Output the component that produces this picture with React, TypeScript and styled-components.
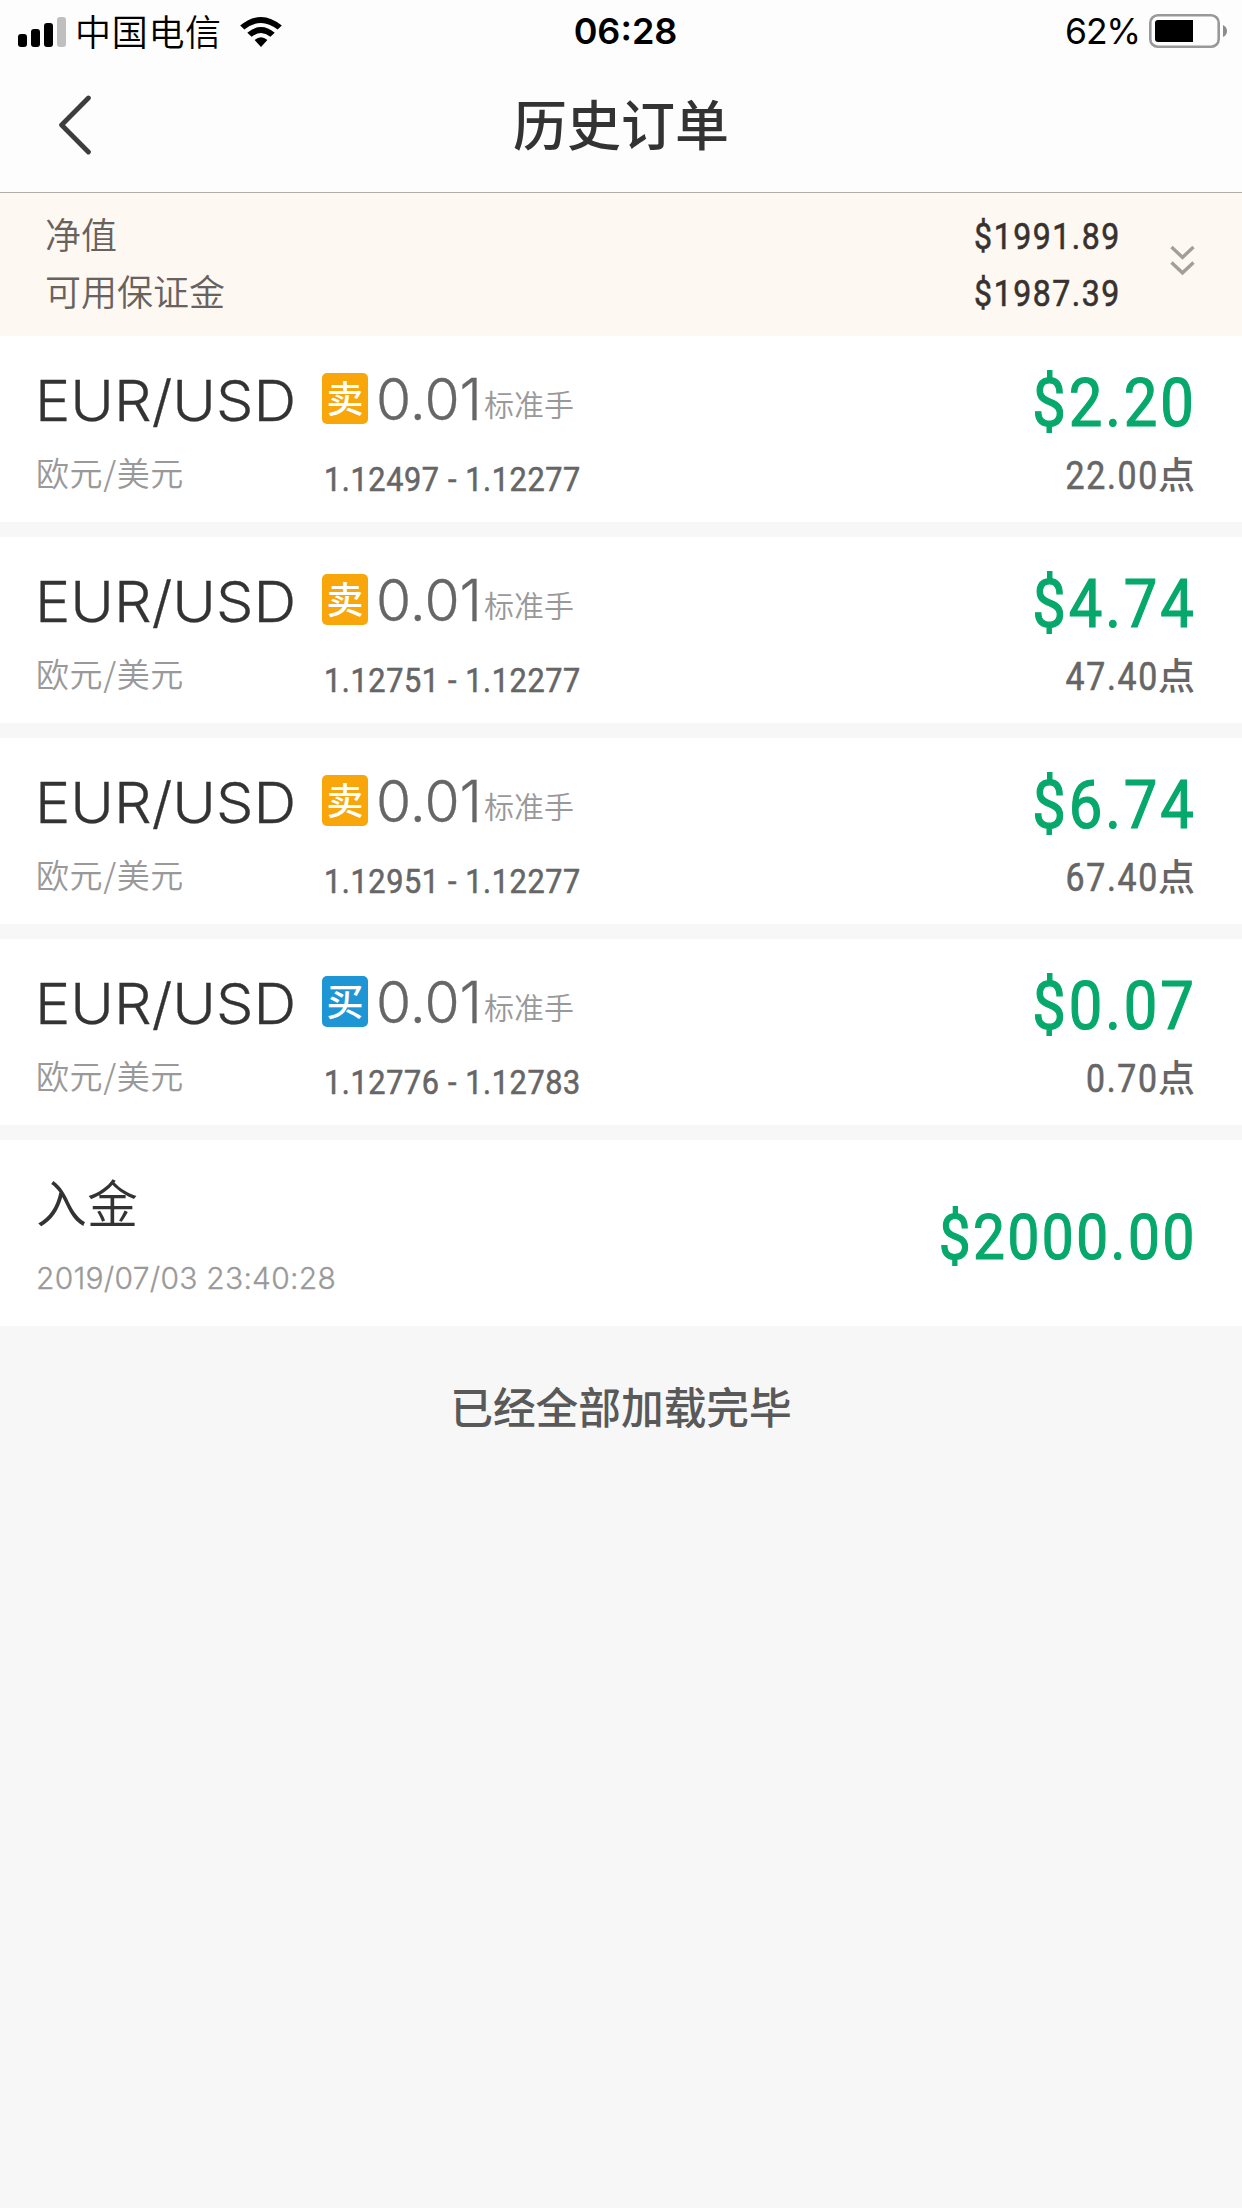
import React from "react";
import styled, { createGlobalStyle } from "styled-components";

const GlobalStyle = createGlobalStyle`
  * { box-sizing: border-box; }
  body { margin: 0; background: #f7f7f7; }
`;

const cjk = `"Noto Sans CJK SC", sans-serif`;
const ui = `Inter, ${cjk}`;
const din = `Roboto, ${cjk}`;

const Screen = styled.div`
  width: 1242px;
  min-height: 2208px;
  background: #f7f7f7;
  font-family: ${ui};
  color: #333;
  white-space: nowrap;
`;

const Top = styled.header`
  height: 193px;
  background: #fdfdfd;
  border-bottom: 1px solid #b5aca5;
`;

const StatusBar = styled.div`
  display: grid;
  grid-template-columns: 1fr auto 1fr;
  height: 62px;
  padding: 0 14px 0 18px;
  color: #000;
  font-size: 36px;
  line-height: 62px;
`;

const StatusSide = styled.div<{ $end?: boolean }>`
  display: flex;
  align-items: center;
  justify-content: ${(p) => (p.$end ? "flex-end" : "flex-start")};
`;

const Carrier = styled.span`
  margin: 0 18px 0 8px;
  font-family: ${cjk};
  font-weight: 350;
  letter-spacing: 0.7px;
  line-height: 58px;
  padding-bottom: 4px;
`;

const Clock = styled.time`
  padding-left: 5px;
  font-weight: 600;
`;

const Percent = styled.span`
  margin-right: 9px;
  font-size: 35.5px;
  line-height: 64px;
  letter-spacing: -1.2px;
`;

const NavBar = styled.div`
  display: grid;
  grid-template-columns: 100px 1fr 100px;
  align-items: center;
  height: 126px;
`;

const BackButton = styled.button`
  height: 126px;
  padding: 0 0 0 58px;
  border: 0;
  background: none;
  display: flex;
  align-items: center;
`;

const Title = styled.h1`
  margin: 0;
  font: 500 54px/122px ${cjk};
  height: 126px;
  text-align: center;
`;

const Summary = styled.section`
  display: flex;
  height: 143px;
  padding: 14px 46px 0 45px;
  background: #fef8f2;
`;

const SummaryLines = styled.dl`
  flex: 1;
  margin: 0;
`;

const SummaryLine = styled.div`
  display: flex;
  justify-content: space-between;
  height: 57px;
`;

const SummaryLabel = styled.dt`
  font: 350 36px/53px ${cjk};
  color: #67625e;
`;

const Din = styled.span<{ $size: number; $squeeze: number; $spacing: number; $stroke?: number; $left?: boolean }>`
  display: inline-block;
  margin-right: ${(p) => 1 - p.$spacing}px;
  font-family: ${din};
  font-weight: 400;
  font-size: ${(p) => p.$size}px;
  letter-spacing: ${(p) => p.$spacing}px;
  -webkit-text-stroke: ${(p) => p.$stroke ?? 0.6}px currentColor;
  transform: scaleX(${(p) => p.$squeeze});
  transform-origin: ${(p) => (p.$left ? "left" : "right")} center;
`;

const SummaryValue = styled.dd`
  margin: 0;
  line-height: 60px;
  color: #37322f;
`;

const Expand = styled.div`
  width: 76px;
  padding: 38px 0 0 50px;
  line-height: 0;
`;

const Row = styled.article`
  display: flex;
  height: 186px;
  margin-bottom: 15px;
  padding: 0 47px 0 35px;
  background: #fff;
`;

const Instrument = styled.div`
  width: 287px;
  padding-top: 32px;
`;

const Symbol = styled.div`
  font-size: 56px;
  font-weight: 300;
  line-height: 66px;
  -webkit-text-stroke: 0.3px currentColor;
  transform: scaleX(1.06);
  transform-origin: left center;
`;

const SymbolName = styled.div`
  margin: 14px 0 0 1px;
  font: 350 33px/48px ${cjk};
  letter-spacing: 0.6px;
  color: #999;
`;

const Deal = styled.div`
  flex: 1;
  padding-top: 37px;
`;

const Volume = styled.div`
  display: flex;
  height: 51px;
`;

const Side = styled.span<{ $buy: boolean }>`
  width: 46px;
  height: 51px;
  margin-right: 8px;
  border-radius: 5px;
  background: ${(p) => (p.$buy ? "#1e96d6" : "#f9a60a")};
  color: #fff;
  font: 500 37px/48px ${cjk};
  text-align: center;
`;

const Lots = styled.span`
  font-size: 57px;
  font-weight: 300;
  line-height: 53px;
  -webkit-text-stroke: 0.3px currentColor;
  color: #666;
`;

const LotUnit = styled.span`
  margin-left: 2px;
  font: 350 30px/60px ${cjk};
  color: #999;
`;

const Prices = styled.div`
  margin: 31px 0 0 2px;
  line-height: 48px;
  color: #666;
`;

const Result = styled.div`
  display: flex;
  flex-direction: column;
  align-items: flex-end;
  padding-top: 28px;
`;

const Profit = styled.div`
  height: 80px;
  line-height: 80px;
  color: #06a86b;
`;

const Points = styled.div`
  display: flex;
  margin-top: 7px;
  line-height: 50px;
  color: #666;
`;

const PointUnit = styled.span`
  font: 500 37px/44px ${cjk};
`;

const DepositInfo = styled.div`
  flex: 1;
  padding: 31px 0 0 1px;
`;

const DepositTitle = styled.div`
  font: 350 51px/60px ${cjk};
`;

const DepositTime = styled.time`
  display: block;
  margin-top: 23px;
  font-size: 30px;
  font-weight: 300;
  line-height: 48px;
  letter-spacing: 0.25px;
  -webkit-text-stroke: 0.3px currentColor;
  color: #999;
`;

const DepositAmount = styled.div`
  padding-top: 28px;
  line-height: 140px;
  color: #06a86b;
`;

const Footer = styled.footer`
  padding-top: 34px;
  text-align: center;
  font: 500 42.7px/60px ${cjk};
  color: #595959;
`;

const SignalIcon = () => (
  <svg width="49" height="32" viewBox="0 0 49 32">
    <rect x="0" y="18" width="9" height="13" rx="3" />
    <rect x="13" y="13" width="9" height="18" rx="3" />
    <rect x="26" y="7" width="9" height="24" rx="3" />
    <rect x="39" y="1" width="9" height="30" rx="3" fill="#bfbfbf" />
  </svg>
);

const WifiIcon = () => (
  <svg width="42" height="32" viewBox="0 0 42 32">
    <path d="M0.2 9.6 Q21 -7.6 41.8 9.6 L37.6 13.6 Q21 0.2 4.4 13.6 Z" />
    <path d="M7.3 16.7 Q21 5.4 34.7 16.7 L30.4 20.8 Q21 13.4 11.6 20.8 Z" />
    <path d="M14.6 24 Q21 18.6 27.4 24 L21 31 Z" />
  </svg>
);

const BatteryIcon = () => (
  <svg width="79" height="36" viewBox="0 0 79 36">
    <rect x="1.3" y="1.3" width="68.4" height="31.4" rx="7.5" fill="none" stroke="#999" strokeWidth="2.6" />
    <path d="M9 6H44V28H9A3 3 0 0 1 6 25V9A3 3 0 0 1 9 6Z" />
    <path d="M74 11Q78 13 78 17T74 23Z" fill="#8c8c8c" />
  </svg>
);

const BackIcon = () => (
  <svg width="34" height="60" viewBox="0 0 34 60" fill="none" stroke="#3d3d3d" strokeWidth="4.8" strokeLinecap="round" strokeLinejoin="round">
    <path d="M30.4 3L3.6 30L30.4 57" />
  </svg>
);

const ExpandIcon = () => (
  <svg width="26" height="32" viewBox="0 0 26 32" fill="none" stroke="#a39e9a" strokeWidth="3.4">
    <path d="M1.5 2L12.5 12.4L23.5 2M1.5 17.4L12.5 27.8L23.5 17.4" />
  </svg>
);

interface Order {
  lots: string;
  buy: boolean;
  open: string;
  close: string;
  profit: string;
  points: string;
}

const orders: Order[] = [
  { lots: "0.01", buy: false, open: "1.12497", close: "1.12277", profit: "$2.20", points: "22.00" },
  { lots: "0.01", buy: false, open: "1.12751", close: "1.12277", profit: "$4.74", points: "47.40" },
  { lots: "0.01", buy: false, open: "1.12951", close: "1.12277", profit: "$6.74", points: "67.40" },
  { lots: "0.01", buy: true, open: "1.12776", close: "1.12783", profit: "$0.07", points: "0.70" },
];

const account = [
  { label: "净值", value: "$1991.89" },
  { label: "可用保证金", value: "$1987.39" },
];

const OrderRow = ({ order }: { order: Order }) => (
  <Row>
    <Instrument>
      <Symbol>EUR/USD</Symbol>
      <SymbolName>欧元/美元</SymbolName>
    </Instrument>
    <Deal>
      <Volume>
        <Side $buy={order.buy}>{order.buy ? "买" : "卖"}</Side>
        <Lots>{order.lots}</Lots>
        <LotUnit>标准手</LotUnit>
      </Volume>
      <Prices>
        <Din $size={34} $squeeze={0.9} $spacing={0.7} $left>
          {order.open} - {order.close}
        </Din>
      </Prices>
    </Deal>
    <Result>
      <Profit>
        <Din $size={66} $squeeze={0.905} $spacing={3.2} $stroke={1.2}>{order.profit}</Din>
      </Profit>
      <Points>
        <Din $size={38} $squeeze={0.89} $spacing={1.9}>{order.points}</Din>
        <PointUnit>点</PointUnit>
      </Points>
    </Result>
  </Row>
);

export default function App() {
  return (
    <Screen>
      <GlobalStyle />
      <Top>
        <StatusBar>
          <StatusSide>
            <SignalIcon />
            <Carrier>中国电信</Carrier>
            <WifiIcon />
          </StatusSide>
          <Clock>06:28</Clock>
          <StatusSide $end>
            <Percent>62%</Percent>
            <BatteryIcon />
          </StatusSide>
        </StatusBar>
        <NavBar>
          <BackButton aria-label="返回">
            <BackIcon />
          </BackButton>
          <Title>历史订单</Title>
        </NavBar>
      </Top>
      <Summary>
        <SummaryLines>
          {account.map((a) => (
            <SummaryLine key={a.label}>
              <SummaryLabel>{a.label}</SummaryLabel>
              <SummaryValue>
                <Din $size={36} $squeeze={0.89} $spacing={1.7}>{a.value}</Din>
              </SummaryValue>
            </SummaryLine>
          ))}
        </SummaryLines>
        <Expand>
          <ExpandIcon />
        </Expand>
      </Summary>
      <main>
        {orders.map((o) => (
          <OrderRow key={o.open} order={o} />
        ))}
        <Row>
          <DepositInfo>
            <DepositTitle>入金</DepositTitle>
            <DepositTime>2019/07/03 23:40:28</DepositTime>
          </DepositInfo>
          <DepositAmount>
            <Din $size={63} $squeeze={0.9} $spacing={2.8} $stroke={1.2}>$2000.00</Din>
          </DepositAmount>
        </Row>
      </main>
      <Footer>已经全部加载完毕</Footer>
    </Screen>
  );
}
